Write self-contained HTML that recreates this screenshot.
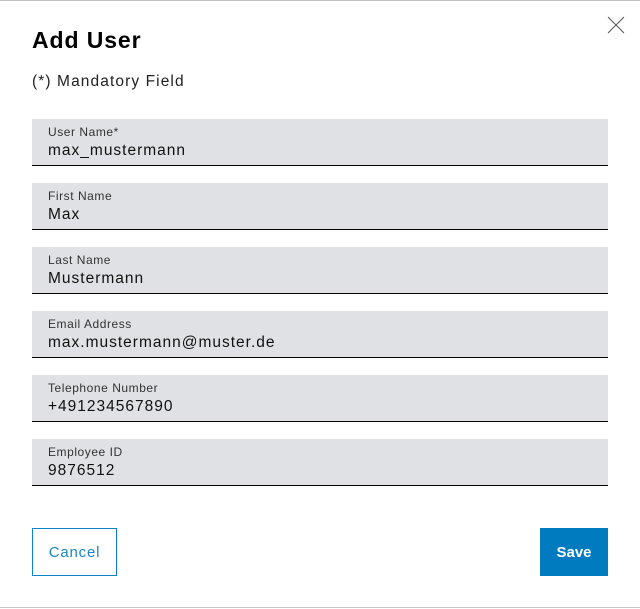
<!DOCTYPE html>
<html><head><style>
body{margin:0;width:640px;height:609px;background:#fff;font-family:"Liberation Sans",sans-serif;position:relative;overflow:hidden;color:#000}
.top{position:absolute;left:0;top:0;width:640px;height:1px;background:#c0c0c0}
.bot{position:absolute;left:0;top:607px;width:640px;height:1px;background:#c8c8c8}
h1{position:absolute;left:32px;top:27px;margin:0;font-size:23px;font-weight:bold;letter-spacing:0.9px}
.mand{position:absolute;left:32px;top:73px;font-size:15.5px;color:#222;letter-spacing:1.1px}
.f{position:absolute;left:32px;width:576px;height:46px;background:#e0e1e5;border-bottom:1px solid #000}
.f .l{position:absolute;left:16px;top:6px;font-size:12px;color:#333;letter-spacing:0.55px}
.f .v{position:absolute;left:16px;top:23px;font-size:15.5px;color:#111;letter-spacing:1px}
.cancel{position:absolute;left:32px;top:528px;width:83px;height:46px;border:1px solid #0a84c6;color:#1a86c8;font-size:15px;letter-spacing:0.8px;display:flex;align-items:center;justify-content:center}
.save{position:absolute;left:540px;top:528px;width:68px;height:48px;background:#007bc0;color:#fff;font-size:15px;font-weight:bold;display:flex;align-items:center;justify-content:center}
</style></head><body>
<div class="top"></div>
<svg style="position:absolute;left:607px;top:16px" width="18" height="18"><path d="M1 1L17 17M17 1L1 17" stroke="#555" stroke-width="1"/></svg>
<h1>Add User</h1>
<div class="mand">(*) Mandatory Field</div>
<div class="f" style="top:119px"><div class="l">User Name*</div><div class="v">max_mustermann</div></div>
<div class="f" style="top:183px"><div class="l">First Name</div><div class="v">Max</div></div>
<div class="f" style="top:247px"><div class="l">Last Name</div><div class="v">Mustermann</div></div>
<div class="f" style="top:311px"><div class="l">Email Address</div><div class="v">max.mustermann@muster.de</div></div>
<div class="f" style="top:375px"><div class="l">Telephone Number</div><div class="v">+491234567890</div></div>
<div class="f" style="top:439px"><div class="l">Employee ID</div><div class="v">9876512</div></div>
<div class="cancel">Cancel</div>
<div class="save">Save</div>
<div class="bot"></div>
</body></html>
